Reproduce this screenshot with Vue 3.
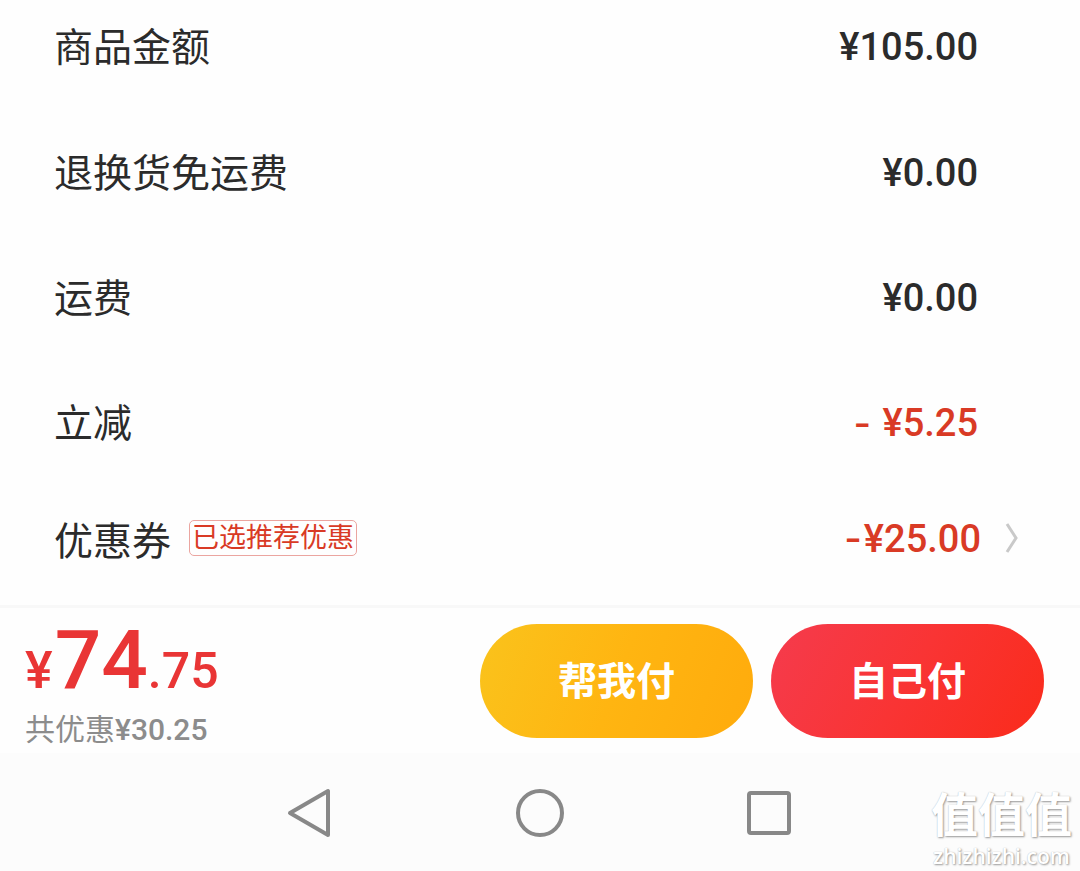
<script setup>
const rows = [
  { label: '商品金额', value: '¥105.00' },
  { label: '退换货免运费', value: '¥0.00' },
  { label: '运费', value: '¥0.00' },
  { label: '立减', value: ' ¥5.25', discount: true },
]
</script>

<template>
  <main class="checkout">
    <dl class="rows">
      <div v-for="row in rows" :key="row.label" class="row">
        <dt>{{ row.label }}</dt>
        <dd :class="{ discount: row.discount }"><span v-if="row.discount" class="minus">-</span>{{ row.value }}</dd>
      </div>
      <div class="row coupon">
        <dt>优惠券 <span class="tag">已选推荐优惠</span></dt>
        <dd class="discount">
          <span><span class="minus">-</span>¥25.00</span>
          <svg class="chevron" viewBox="0 0 14 32" aria-hidden="true">
            <path d="M2 2 L11 16 L2 30" />
          </svg>
        </dd>
      </div>
    </dl>

    <footer class="pay">
      <div class="total">
        <p class="price"><span class="yen">¥</span><span class="whole">74</span><span class="cents">.75</span></p>
        <p class="saved">共优惠<span class="saved-sum">¥30.25</span></p>
      </div>
      <div class="actions">
        <button type="button" class="friend">帮我付</button>
        <button type="button" class="self">自己付</button>
      </div>
    </footer>

    <nav class="system">
      <button type="button" aria-label="返回">
        <svg viewBox="0 0 50 50"><path d="M43 3 V47 L5 25 Z" /></svg>
      </button>
      <button type="button" aria-label="主页">
        <svg viewBox="0 0 50 50"><circle cx="25" cy="25" r="22" /></svg>
      </button>
      <button type="button" aria-label="最近任务">
        <svg viewBox="0 0 50 50"><rect x="4" y="5" width="40" height="40" rx="2" /></svg>
      </button>
    </nav>

    <div class="mark">
      <span class="mark-name">值值值</span>
      <span class="mark-site">zhizhizhi.com</span>
    </div>
  </main>
</template>

<style>
body {
  background: #fdfdfd;
}
</style>

<style scoped>
.checkout {
  position: relative;
  font-family: Roboto, "Noto Sans CJK SC", sans-serif;
  color: #2b2b2b;
  background: #fefefe;
}

.rows {
  margin: 0;
  padding-bottom: 14px;
  border-bottom: 3px solid #f8f8f8;
}

.row {
  display: flex;
  box-sizing: border-box;
  align-items: center;
  justify-content: space-between;
  height: 125px;
  padding: 0 102px 0 54px;
}

.row:first-child {
  height: 110px;
  padding-bottom: 16px;
}

.row.coupon {
  height: 106px;
  padding-right: 61px;
}

dt {
  display: flex;
  align-items: center;
  gap: 18px;
  padding-bottom: 6px;
  font-size: 39px;
}

.coupon dt {
  padding-bottom: 0;
}

dd {
  display: flex;
  align-items: center;
  margin: 0;
  font-size: 38px;
  font-weight: 500;
  white-space: pre;
}

.coupon dd {
  gap: 24px;
  white-space: normal;
}

.discount {
  color: #d93a25;
}

.minus {
  padding-right: 2px;
  font-family: Inter, sans-serif;
}

.tag {
  padding: 0 2px;
  border: 1px solid #eba5a0;
  border-radius: 5px;
  font-size: 27px;
  line-height: 34px;
  color: #d93a25;
}

.chevron {
  width: 14px;
  height: 32px;
  fill: none;
  stroke: #c9c9c9;
  stroke-width: 3;
}

.pay {
  display: flex;
  align-items: center;
  justify-content: space-between;
  height: 145px;
  padding: 0 36px 0 25px;
}

.total {
  padding-top: 16px;
}

.price,
.saved {
  margin: 0;
}

.price {
  line-height: 60px;
  font-weight: 500;
  color: #e93535;
  white-space: nowrap;
}

.yen {
  padding-right: 2px;
  font-size: 52px;
}

.cents {
  font-size: 50px;
}

.whole {
  font-size: 82px;
}

.saved {
  font-size: 30px;
  line-height: 34px;
  color: #8c8c8c;
}

.saved-sum {
  font-weight: 500;
}

.actions {
  display: flex;
  gap: 18px;
}

.actions button {
  width: 273px;
  height: 114px;
  border: 0;
  border-radius: 57px;
  padding: 0 0 6px;
  font: 700 39px "Noto Sans CJK SC", sans-serif;
  color: #fff;
}

.actions .friend {
  background: linear-gradient(110deg, #fac31c, #ffb511 50%, #ffab0c);
}

.actions .self {
  background: linear-gradient(120deg, #f53b4d, #f93434 50%, #fa2b1b);
}

.system {
  display: flex;
  justify-content: center;
  gap: 180px;
  height: 119px;
  background: #fcfcfc;
}

.system button {
  width: 50px;
  padding: 0;
  border: 0;
  background: none;
}

.system svg {
  display: block;
  width: 50px;
  height: 50px;
  fill: none;
  stroke: #888;
  stroke-width: 4;
  stroke-linejoin: round;
}

.mark {
  position: absolute;
  right: 8px;
  bottom: 4px;
  display: flex;
  flex-direction: column;
  align-items: center;
  color: #fff;
  text-shadow: 1px 1px 2px #999, 0 0 1px #bbb;
}

.mark-name {
  font: 700 47px/48px "Noto Sans CJK SC", sans-serif;
}

.mark-site {
  padding-top: 8px;
  font: 600 21px/24px "Open Sans", sans-serif;
}
</style>
